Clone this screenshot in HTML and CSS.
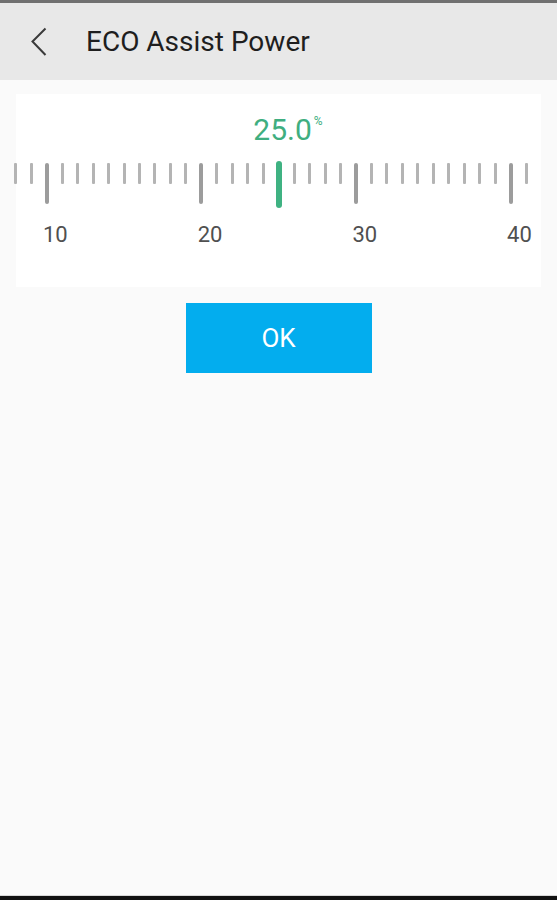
FILE: index.html
```html
<!DOCTYPE html>
<html lang="en">
<head>
    <meta charset="UTF-8">
    <meta name="viewport" content="width=device-width, initial-scale=1.0">
    <title>ECO Assist Power</title>
    <link rel="stylesheet" href="styles.css">
</head>
<body>

<div class="screen">
    <div class="header">
        <div class="back-btn">
            <svg width="16" height="30" viewBox="0 0 16 30">
                <polyline points="14.5,1.5 1.5,14.5 14.5,28" fill="none" stroke="#3a3a3a" stroke-width="2"/>
            </svg>
        </div>
        <h1 class="title">ECO Assist Power</h1>
    </div>

    <div class="ruler-card">
        <div class="value">
            <span id="valueText">25.0</span><span class="unit">%</span>
        </div>

        <!-- ticks are filled by the script below -->
        <div class="ruler" id="ruler"></div>

        <div class="labels">
            <span>10</span>
            <span>20</span>
            <span>30</span>
            <span>40</span>
        </div>
    </div>

    <button class="ok-btn" id="okBtn">OK</button>

    <div class="nav-bar"></div>
</div>

<script>
    // Build the ruler ticks, one per unit
    const ruler = document.getElementById('ruler');
    const current = 25;

    for (let v = 8; v <= 41; v++) {
        const cell = document.createElement('div');
        cell.className = 'cell';

        const tick = document.createElement('div');
        if (v === current) {
            tick.className = 'tick active';
        } else if (v % 10 === 0) {
            tick.className = 'tick major';
        } else {
            tick.className = 'tick';
        }

        cell.appendChild(tick);
        ruler.appendChild(cell);
    }
</script>
</body>
</html>
```

FILE: styles.css
```css
html, body {
    margin: 0;
    padding: 0;
}

body {
    font-family: Roboto, "Noto Sans", sans-serif;
    background-color: #fafafa;
}

.screen {
    min-height: 900px;
    display: flex;
    flex-direction: column;
    border-top: 3px solid #707070;
    box-sizing: border-box;
}

/* Top bar */
.header {
    height: 77px;
    background-color: #e8e8e8;
    display: flex;
    align-items: center;
}

.back-btn {
    width: 32px;
    padding-left: 31px;
    display: flex;
    align-items: center;
}

.title {
    margin: 0 0 0 23px;
    font-size: 28px;
    font-weight: 400;
    color: #1e1e1e;
}

/* Ruler card */
.ruler-card {
    margin: 14px 16px 0 16px;
    background-color: #fff;
    height: 193px;
    box-sizing: border-box;
    padding-top: 19px;
}

.value {
    text-align: center;
    color: #3fae80;
    font-size: 30px;
    line-height: 34px;
    padding-left: 6px;
}

.unit {
    display: inline-block;
    vertical-align: top;
    font-size: 12px;
    line-height: 16px;
    margin-right: -13px;
    margin-left: 2px;
}

.ruler {
    display: flex;
    width: 526px;
    margin-left: -8px;
    margin-top: 14px;
    height: 47px;
}

.cell {
    flex: 1;
    display: flex;
    justify-content: center;
    align-items: flex-start;
    padding-top: 2px;
}

.tick {
    width: 3px;
    height: 21px;
    background-color: #b4b4b4;
    border-radius: 1px;
}

.tick.major {
    width: 4px;
    height: 41px;
    background-color: #9c9c9c;
    border-radius: 2px;
}

.tick.active {
    width: 6px;
    height: 47px;
    margin-top: -2px;
    background-color: #3fb282;
    border-radius: 3px;
}

.labels {
    display: flex;
    padding-left: 27px;
    margin-top: 14px;
    font-size: 22px;
    color: #505050;
}

.labels span {
    flex-shrink: 0;
    width: 154.7px;
}

.labels span:last-child {
    width: auto;
}

/* OK button */
.ok-btn {
    align-self: center;
    margin-top: 16px;
    width: 186px;
    height: 70px;
    background-color: #03adee;
    color: #fff;
    border: none;
    font-family: Roboto, "Noto Sans", sans-serif;
    font-size: 26px;
    font-weight: 400;
    cursor: pointer;
}

/* Android nav bar edge */
.nav-bar {
    margin-top: auto;
    height: 4px;
    background-color: #111;
    border-top: 1px solid #d8d8d8;
}
```
